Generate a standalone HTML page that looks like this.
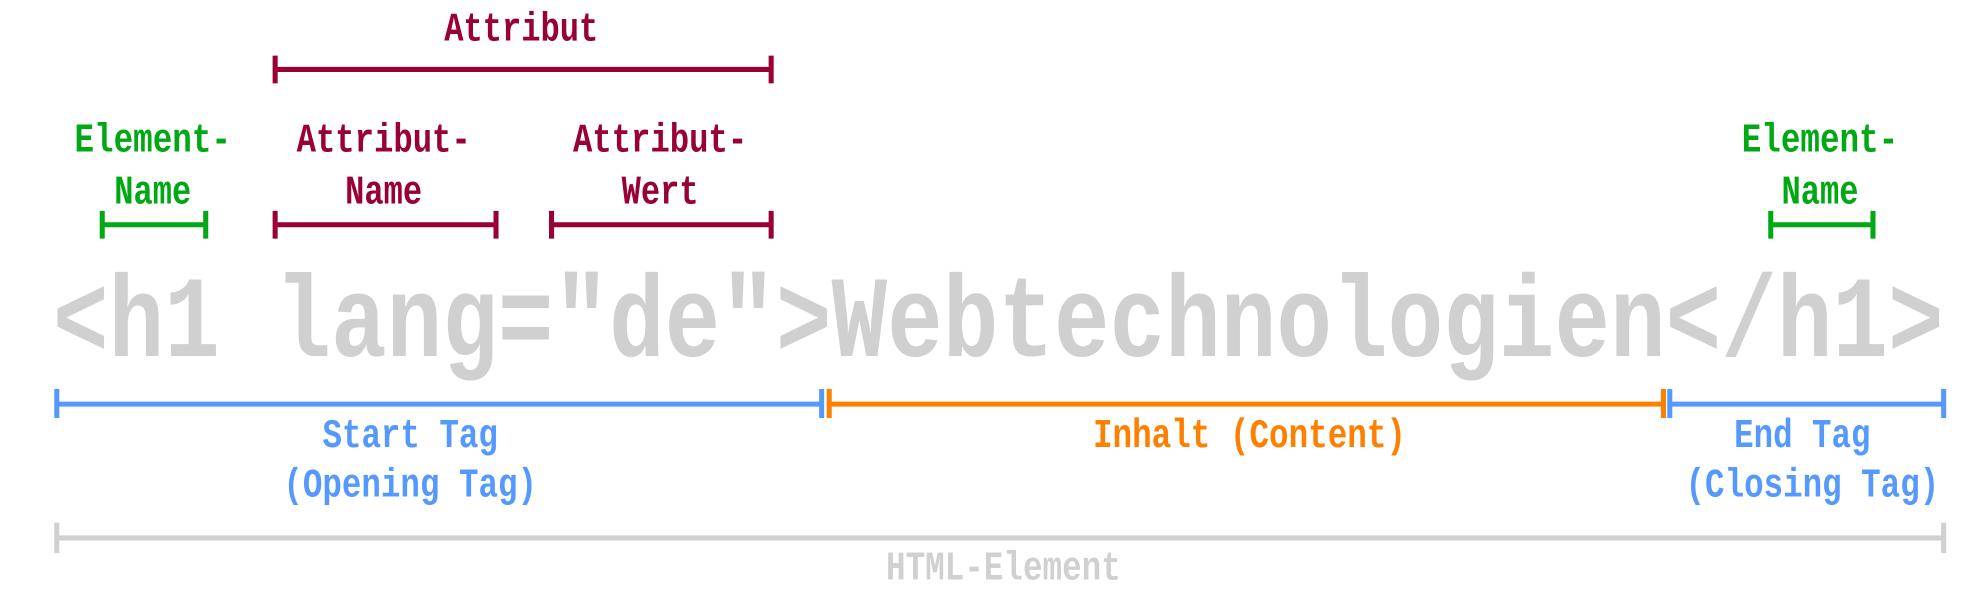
<!DOCTYPE html>
<html><head><meta charset="utf-8"><style>
html,body{margin:0;padding:0;background:#fff;}
svg{display:block;}
text{font-family:"Liberation Mono",monospace;font-weight:bold;}
</style></head><body>
<svg width="1979" height="591" viewBox="0 0 1568 468" preserveAspectRatio="none" xmlns="http://www.w3.org/2000/svg">
<g fill="none" stroke-width="4">
<g stroke="#990033">
<path d="M218 55H611M218 44V66M611 44V66" />
<path d="M218 178H393M218 167V189M393 167V189"/>
<path d="M437 178H611M437 167V189M611 167V189"/>
</g>
<g stroke="#00a814">
<path d="M81 178H163M81 167V189M163 167V189"/>
<path d="M1403 178H1484M1403 167V189M1484 167V189"/>
</g>
<g stroke="#5599ff">
<path d="M45 320H651M45 308V331M651 308V331"/>
<path d="M1323 320H1540M1323 308V331M1540 308V331"/>
</g>
<path stroke="#ff8000" d="M657 320H1318M657 308V331M1318 308V331"/>
<path stroke="#d0d0d0" d="M45 426H1540M45 414V438M1540 414V438"/>
</g>
<g font-size="32" text-anchor="middle">
<g fill="#990033">
<text x="413" y="32" textLength="122" lengthAdjust="spacingAndGlyphs">Attribut</text>
<text x="304" y="120" textLength="138" lengthAdjust="spacingAndGlyphs">Attribut-</text>
<text x="304" y="161" textLength="61" lengthAdjust="spacingAndGlyphs">Name</text>
<text x="523" y="120" textLength="138" lengthAdjust="spacingAndGlyphs">Attribut-</text>
<text x="523" y="161" textLength="61" lengthAdjust="spacingAndGlyphs">Wert</text>
</g>
<g fill="#00a814">
<text x="121" y="120" textLength="124" lengthAdjust="spacingAndGlyphs">Element-</text>
<text x="121" y="161" textLength="61" lengthAdjust="spacingAndGlyphs">Name</text>
<text x="1442" y="120" textLength="124" lengthAdjust="spacingAndGlyphs">Element-</text>
<text x="1442" y="161" textLength="61" lengthAdjust="spacingAndGlyphs">Name</text>
</g>
<g fill="#5599ff">
<text x="325" y="354" textLength="139" lengthAdjust="spacingAndGlyphs">Start Tag</text>
<text x="325" y="393" textLength="201" lengthAdjust="spacingAndGlyphs">(Opening Tag)</text>
<text x="1428" y="354" textLength="108" lengthAdjust="spacingAndGlyphs">End Tag</text>
<text x="1436" y="393" textLength="201" lengthAdjust="spacingAndGlyphs">(Closing Tag)</text>
</g>
<text fill="#ff8000" x="990" y="354" textLength="248" lengthAdjust="spacingAndGlyphs">Inhalt (Content)</text>
<text fill="#d0d0d0" x="795" y="459" textLength="186" lengthAdjust="spacingAndGlyphs">HTML-Element</text>
</g>
<text fill="#d0d0d0" font-size="92" x="42" y="282" textLength="1498" lengthAdjust="spacingAndGlyphs">&lt;h1 lang="de"&gt;Webtechnologien&lt;/h1&gt;</text>
</svg>
</body></html>
